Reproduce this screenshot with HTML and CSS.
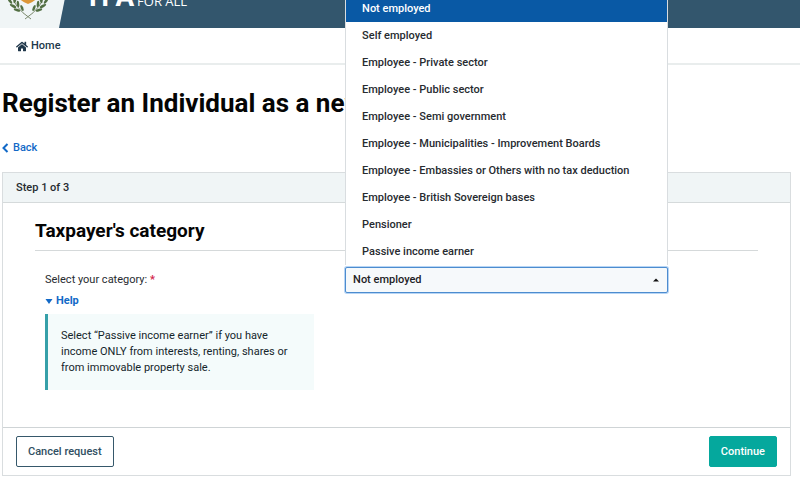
FILE: index.html
```html
<!DOCTYPE html>
<html lang="en">
<head>
<meta charset="utf-8">
<title>Register an Individual</title>
<link rel="stylesheet" href="styles.css">
</head>
<body>
<header class="masthead">
  <div class="emblem">
    <svg viewBox="0 0 40 40" width="40" height="40" aria-hidden="true">
      <path d="M9 0h22v12q0 8-11 12Q9 20 9 12z" fill="#dc9638"/>
      <g fill="none" stroke="#7d8b70" stroke-width="1">
        <path d="M3 12Q5 27 23 39M37 12Q35 27 17 39"/>
      </g>
      <g fill="#526f43">
        <ellipse cx="2" cy="21" rx="1.3" ry="3.3" transform="rotate(-35 2 21)"/>
        <ellipse cx="7" cy="20" rx="1.3" ry="3.3" transform="rotate(12 7 20)"/>
        <ellipse cx="5" cy="26" rx="1.3" ry="3.5" transform="rotate(-62 5 26)"/>
        <ellipse cx="10" cy="24" rx="1.3" ry="3.3" transform="rotate(-5 10 24)"/>
        <ellipse cx="9" cy="30" rx="1.2" ry="3.5" transform="rotate(-72 9 30)"/>
        <ellipse cx="14" cy="28" rx="1.3" ry="3.2" transform="rotate(-22 14 28)"/>
        <ellipse cx="38" cy="21" rx="1.3" ry="3.3" transform="rotate(35 38 21)"/>
        <ellipse cx="33" cy="20" rx="1.3" ry="3.3" transform="rotate(-12 33 20)"/>
        <ellipse cx="35" cy="26" rx="1.3" ry="3.5" transform="rotate(62 35 26)"/>
        <ellipse cx="30" cy="24" rx="1.3" ry="3.3" transform="rotate(5 30 24)"/>
        <ellipse cx="31" cy="30" rx="1.2" ry="3.5" transform="rotate(72 31 30)"/>
        <ellipse cx="26" cy="28" rx="1.3" ry="3.2" transform="rotate(22 26 28)"/>
      </g>
    </svg>
  </div>
  <div class="brand"><strong>TFA</strong><span>FOR ALL</span></div>
</header>
<nav class="nav">
  <a href="#">
    <svg viewBox="0 0 576 512" width="12" height="11" aria-hidden="true"><path fill="currentColor" d="M280 148 96 300v164q0 16 16 16h112q16 0 16-16v-96q0-16 16-16h64q16 0 16 16v96q0 16 16 16h112q16 0 16-16V300L296 148q-8-6-16 0zM572 251l-84-69V44q0-12-12-12h-56q-12 0-12 12v72l-90-74q-30-24-60 0L4 251q-9 8-2 17l26 31q8 9 17 2l235-194q8-6 16 0l235 194q9 7 17-2l26-31q7-9-2-17z"/></svg>
    <span>Home</span>
  </a>
</nav>
<main class="page">
  <h1>Register an Individual as a new</h1>
  <a class="back" href="#">
    <svg viewBox="0 0 7 10" width="7" height="10" aria-hidden="true"><path d="M5.500 1 1.500 5l4 4" fill="none" stroke="currentColor" stroke-width="2"/></svg>
    <span>Back</span>
  </a>
  <form class="card">
    <div class="card-head">Step 1 of 3</div>
    <div class="card-body">
      <h2>Taxpayer's category</h2>
      <div class="row">
        <div class="info">
          <label for="category">Select your category: <span class="required">*</span></label>
          <details open>
            <summary>
              <svg viewBox="0 0 8 5" width="8" height="5" aria-hidden="true"><path d="M.5 0h7L4 5z" fill="currentColor"/></svg>
              <span>Help</span>
            </summary>
            <p class="help">Select “Passive income earner” if you have income ONLY from interests, renting, shares or from immovable property sale.</p>
          </details>
        </div>
        <div class="picker">
          <select id="category">
            <option>Not employed</option>
          </select>
          <svg class="caret" viewBox="0 0 6 4" width="6" height="4" aria-hidden="true"><path d="M0 3.500 3 .5l3 3z" fill="#111"/></svg>
          <ul class="options" role="listbox" aria-label="Category options">
            <li class="selected" role="option" aria-selected="true">Not employed</li>
            <li role="option">Self employed</li>
            <li role="option">Employee - Private sector</li>
            <li role="option">Employee - Public sector</li>
            <li role="option">Employee - Semi government</li>
            <li role="option">Employee - Municipalities - Improvement Boards</li>
            <li role="option">Employee - Embassies or Others with no tax deduction</li>
            <li role="option">Employee - British Sovereign bases</li>
            <li role="option">Pensioner</li>
            <li role="option">Passive income earner</li>
          </ul>
        </div>
      </div>
    </div>
    <div class="card-foot">
      <button type="button" class="btn outline">Cancel request</button>
      <button type="submit" class="btn solid">Continue</button>
    </div>
  </form>
</main>
</body>
</html>
```
FILE: styles.css
```css
* { box-sizing: border-box; }
body {
  margin: 0;
  background: #fff;
  color: #272b30;
  font: 500 11px/16px Roboto, sans-serif;
  overflow: hidden;
}
a { color: inherit; text-decoration: none; }

.masthead {
  display: flex;
  align-items: flex-end;
  gap: 18px;
  height: 28px;
  overflow: hidden;
  background: #33566d;
}
.emblem {
  display: flex;
  align-items: flex-end;
  width: 67px;
  height: 40px;
  padding: 0 0 8px 8px;
  background: #f0f5f6;
  clip-path: polygon(0 0, 100% 0, 59px 100%, 0 100%);
}
.brand {
  display: flex;
  align-items: baseline;
  gap: 3px;
  padding-bottom: 18px;
  color: #fff;
}
.brand strong { font: 700 27px/28px "Open Sans", sans-serif; }
.brand span { font: 400 13px/16px "Open Sans", sans-serif; }

.nav {
  padding: 10px 16px 9px;
  border-bottom: 2px solid #e9eded;
  color: #21384b;
}
.nav a { display: flex; align-items: center; gap: 3px; width: max-content; }
.nav svg { display: block; }

.page { padding: 23px 9px 0 2px; }
h1 {
  margin: 0 0 22px;
  color: #050505;
  font: 700 26px/30px Roboto, sans-serif;
  white-space: nowrap;
}
.back { display: flex; align-items: center; gap: 4px; width: max-content; color: #1269c7; }

.card { margin-top: 16px; border: 1px solid #d9dddf; }
.card-head { padding: 7px 13px 6px; border-bottom: 1px solid #d5dadb; background: #f0f5f6; }
.card-body { padding: 16px 32px 37px; }
h2 {
  margin: 0 0 16px;
  padding-bottom: 7px;
  border-bottom: 1px solid #d5d9da;
  color: #050505;
  font: 700 19px/24px Roboto, sans-serif;
}
.row { display: grid; grid-template-columns: 5fr 6fr; gap: 31px; padding: 0 90px 0 10px; }
.info { padding-top: 5px; font-weight: 400; }
label { display: block; }
.required { color: #d3244c; font-weight: 700; }
summary {
  display: flex;
  align-items: center;
  gap: 3px;
  margin-top: 5px;
  color: #1269c7;
  font-weight: 700;
  list-style: none;
}
.help {
  margin: 5px 0 0;
  padding: 14px 24px 14px 13px;
  border-left: 3px solid #36a0a9;
  background: #f4fbfb;
  color: #14262b;
}
.picker { position: relative; align-self: start; }
select {
  display: block;
  width: 100%;
  height: 26px;
  padding: 0 7px;
  appearance: none;
  border: 1px solid #4d8ccf;
  border-radius: 2px;
  background: #f6f9fb;
  box-shadow: 0 0 0 1px #b7d5f5;
  color: #1d2125;
  font: inherit;
}
.caret { position: absolute; right: 9px; top: 11px; }
.options {
  position: absolute;
  right: 0;
  bottom: 100%;
  left: 0;
  margin: 0 0 2px;
  padding: 0;
  border-right: 1px solid #d9dde0;
  border-left: 1px solid #d9dde0;
  background: #fff;
  list-style: none;
}
.options li { height: 27px; padding: 0 16px; line-height: 27px; }
.options .selected { background: #0959a5; color: #fff; }

.card-foot {
  display: flex;
  justify-content: space-between;
  padding: 8px 13px;
  border-top: 1px solid #cfd4d6;
}
.btn {
  height: 31px;
  padding: 0 11px;
  border: 1px solid #36586b;
  border-radius: 2px;
  font: 500 11px/16px Roboto, sans-serif;
}
.outline { background: #fff; color: #304f62; }
.solid { border-color: #05a89d; background: #05a89d; color: #fff; }
```
